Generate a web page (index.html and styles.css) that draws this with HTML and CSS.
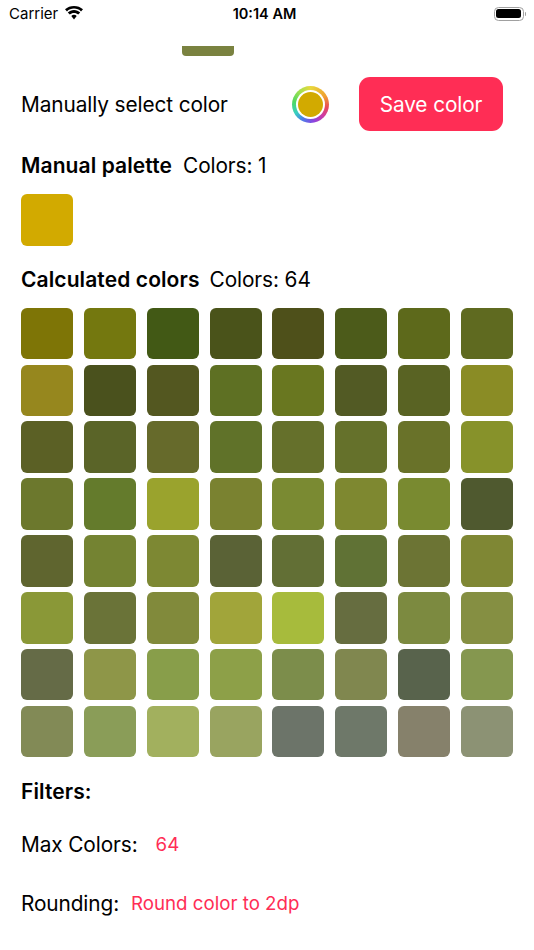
FILE: index.html
```html
<!DOCTYPE html>
<html lang="en">
<head>
<meta charset="utf-8">
<title>Palette</title>
<link rel="stylesheet" href="styles.css">
</head>
<body>
<div class="screen">
  <header class="status">
    <div class="status-left">
      <span>Carrier</span>
      <svg class="wifi" viewBox="0 0 20 14" width="20" height="14" aria-hidden="true">
        <path d="M10 2.6c2.700 0 5.200 1 7 2.800L19 3.300C16.600 1.200 13.500 0 10 0S3.400 1.200 1 3.300l2 2.100C4.800 3.600 7.300 2.600 10 2.600z"/>
        <path d="M10 6.900c1.600 0 3.100.6 4.200 1.700l2-2.100C14.500 5 12.400 4.100 10 4.100S5.500 5 3.800 6.500l2 2.100C6.900 7.500 8.400 6.900 10 6.900z"/>
        <path d="M10 8.800c-1 0-2 .4-2.700 1.100L10 13.400l2.700-3.500C12 9.200 11 8.800 10 8.800z"/>
      </svg>
    </div>
    <div class="status-time">10:14 AM</div>
    <div class="status-right">
      <div class="battery"><div class="battery-fill"></div></div>
      <div class="battery-cap"></div>
    </div>
  </header>

  <div class="handle"></div>

  <div class="manual-row">
    <span class="label">Manually select color</span>
    <div class="well"><div class="well-dot"></div></div>
    <button class="save" type="button">Save color</button>
  </div>

  <h2 class="section"><b>Manual palette</b><span>Colors: 1</span></h2>
  <div class="grid manual-grid">
    <div class="swatch" style="background:#d2aa00"></div>
  </div>

  <h2 class="section calc"><b>Calculated colors</b><span>Colors: 64</span></h2>
  <div class="grid colors-grid">
    <div class="swatch" style="background:#7e7506"></div>
    <div class="swatch" style="background:#74780f"></div>
    <div class="swatch" style="background:#425915"></div>
    <div class="swatch" style="background:#4a531a"></div>
    <div class="swatch" style="background:#4e501a"></div>
    <div class="swatch" style="background:#4c5b1a"></div>
    <div class="swatch" style="background:#5d691b"></div>
    <div class="swatch" style="background:#5f6a20"></div>

    <div class="swatch" style="background:#96871e"></div>
    <div class="swatch" style="background:#4a511d"></div>
    <div class="swatch" style="background:#535720"></div>
    <div class="swatch" style="background:#5e7023"></div>
    <div class="swatch" style="background:#697720"></div>
    <div class="swatch" style="background:#525a24"></div>
    <div class="swatch" style="background:#596323"></div>
    <div class="swatch" style="background:#8a8c25"></div>

    <div class="swatch" style="background:#5b6025"></div>
    <div class="swatch" style="background:#5a6428"></div>
    <div class="swatch" style="background:#666a2b"></div>
    <div class="swatch" style="background:#607229"></div>
    <div class="swatch" style="background:#65702b"></div>
    <div class="swatch" style="background:#65712b"></div>
    <div class="swatch" style="background:#697229"></div>
    <div class="swatch" style="background:#87922a"></div>

    <div class="swatch" style="background:#6c782d"></div>
    <div class="swatch" style="background:#647b2c"></div>
    <div class="swatch" style="background:#9aa32d"></div>
    <div class="swatch" style="background:#7a8230"></div>
    <div class="swatch" style="background:#7a8a32"></div>
    <div class="swatch" style="background:#7e8830"></div>
    <div class="swatch" style="background:#798a30"></div>
    <div class="swatch" style="background:#4f592f"></div>

    <div class="swatch" style="background:#5f652f"></div>
    <div class="swatch" style="background:#748332"></div>
    <div class="swatch" style="background:#7d8833"></div>
    <div class="swatch" style="background:#5a6236"></div>
    <div class="swatch" style="background:#626f35"></div>
    <div class="swatch" style="background:#607235"></div>
    <div class="swatch" style="background:#6c7434"></div>
    <div class="swatch" style="background:#7f8734"></div>

    <div class="swatch" style="background:#8a9837"></div>
    <div class="swatch" style="background:#6a7338"></div>
    <div class="swatch" style="background:#818a3b"></div>
    <div class="swatch" style="background:#a1a53a"></div>
    <div class="swatch" style="background:#a7bb3c"></div>
    <div class="swatch" style="background:#666d40"></div>
    <div class="swatch" style="background:#7c8a40"></div>
    <div class="swatch" style="background:#858f42"></div>

    <div class="swatch" style="background:#656b47"></div>
    <div class="swatch" style="background:#8e9648"></div>
    <div class="swatch" style="background:#889e4a"></div>
    <div class="swatch" style="background:#8da048"></div>
    <div class="swatch" style="background:#7c8d4b"></div>
    <div class="swatch" style="background:#80874f"></div>
    <div class="swatch" style="background:#58634c"></div>
    <div class="swatch" style="background:#85974f"></div>

    <div class="swatch" style="background:#828a56"></div>
    <div class="swatch" style="background:#8a9d58"></div>
    <div class="swatch" style="background:#a2b05e"></div>
    <div class="swatch" style="background:#99a460"></div>
    <div class="swatch" style="background:#6c7469"></div>
    <div class="swatch" style="background:#6e7869"></div>
    <div class="swatch" style="background:#86816b"></div>
    <div class="swatch" style="background:#8c9274"></div>
  </div>

  <div class="filters">Filters:</div>
  <div class="filter-row max"><span class="label">Max Colors:</span><span class="value">64</span></div>
  <div class="filter-row round"><span class="label">Rounding:</span><span class="value">Round color to 2dp</span></div>
</div>
</body>
</html>
```

FILE: styles.css
```css
* { box-sizing: border-box; }
html, body { margin: 0; padding: 0; background: #fff; }
body {
  width: 534px;
  height: 950px;
  overflow: hidden;
  font-family: Inter, "Liberation Sans", sans-serif;
  color: #000;
}
.screen { display: flex; flex-direction: column; height: 950px; }

.status {
  height: 27px;
  display: grid;
  grid-template-columns: 1fr auto 1fr;
  align-items: center;
  padding: 0 8px 0 9px;
  font-size: 15px;
  flex: none;
}
.status-left { display: flex; align-items: center; gap: 6px; font-weight: 400; }
.wifi { fill: #000; margin-top: -1px; }
.status-time { font-weight: 600; font-size: 14.5px; margin-right: 6px; }
.status-right { display: flex; justify-content: flex-end; align-items: center; gap: 1px; }
.battery {
  width: 30px;
  height: 14px;
  border: 1px solid #a0a0a0;
  border-radius: 4.500px;
  padding: 1.500px;
}
.battery-fill { width: 100%; height: 100%; background: #000; border-radius: 2.500px; }
.battery-cap { width: 1.500px; height: 4px; background: #a0a0a0; border-radius: 0 1px 1px 0; }

.handle {
  width: 52px;
  height: 10px;
  margin: 19px 0 0 182px;
  background: #7a8240;
  border-radius: 0 0 4px 4px;
  flex: none;
}

.manual-row {
  display: flex;
  align-items: center;
  margin-top: 21px;
  padding-left: 21px;
  height: 54px;
  flex: none;
}
.label { font-size: 20.800px; letter-spacing: -0.1px; }
.manual-row .label { width: 271px; }
.well {
  width: 37px;
  height: 37px;
  border-radius: 50%;
  background: conic-gradient(#e8d83c, #f0a030 60deg, #e84a5a 100deg, #d03aa0 130deg, #8a44e0 170deg, #4a80e8 210deg, #38d0c0 240deg, #50d860 280deg, #a0e050 320deg, #e8d83c);
  display: flex;
  align-items: center;
  justify-content: center;
  flex: none;
}
.well-dot {
  width: 25px;
  height: 25px;
  border-radius: 50%;
  background: #d2aa00;
  box-shadow: 0 0 0 2px #fff;
}
.save {
  margin-left: 30px;
  width: 144px;
  height: 54px;
  border: 0;
  border-radius: 11px;
  background: #ff2d55;
  color: #fff;
  font: 400 20.800px Inter, "Liberation Sans", sans-serif;
  letter-spacing: -0.1px;
}

.section {
  margin: 21px 0 0;
  padding-left: 21px;
  display: flex;
  gap: 11px;
  height: 26px;
  align-items: center;
  font-size: 20.800px;
  font-weight: 400;
  letter-spacing: -0.1px;
  flex: none;
}
.section b { font-weight: 600; font-size: 21px; letter-spacing: 0.1px; }
.section.calc { margin-top: 20.600px; gap: 10px; }

.grid {
  margin: 15px 0 0 21px;
  width: 492px;
  display: grid;
  grid-template-columns: repeat(8, 52px);
  grid-auto-rows: 51.600px;
  column-gap: 10.850px;
  row-gap: 5.250px;
  flex: none;
}
.manual-grid { margin-top: 16px; grid-auto-rows: 52px; }
.colors-grid { margin-top: 15.200px; }
.swatch { border-radius: 6px; }

.filters {
  margin: 21.500px 0 0 21px;
  font-size: 21px;
  font-weight: 600;
  letter-spacing: 0.1px;
  flex: none;
}
.filter-row {
  display: flex;
  align-items: center;
  padding-left: 21px;
  flex: none;
}
.filter-row.max { margin-top: 28px; gap: 18px; }
.filter-row.round { margin-top: 34px; gap: 12px; }
.value { font-size: 18.700px; color: #ff2d55; }
```
